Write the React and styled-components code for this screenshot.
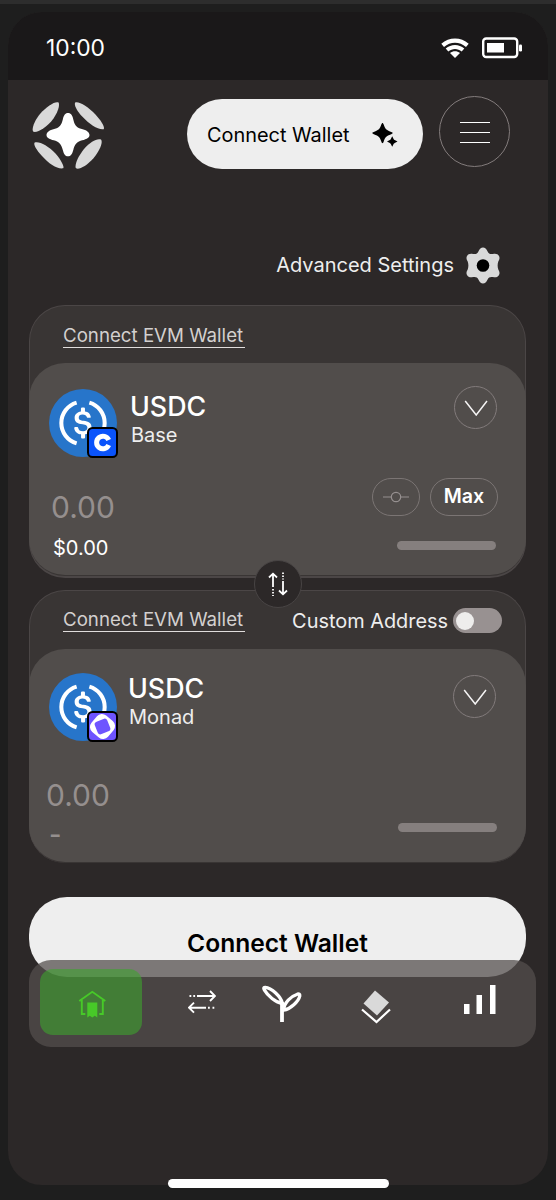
import styled, { createGlobalStyle } from "styled-components";

const GlobalStyle = createGlobalStyle`
  * {
    box-sizing: border-box;
  }

  body {
    margin: 0;
    background-color: #1e1e1e;
    font-family: Inter, "Liberation Sans", sans-serif;
  }

  button {
    font-family: inherit;
    padding: 0;
    border: none;
    background: none;
    cursor: pointer;
  }

  svg {
    display: block;
    flex: none;
  }
`;

const Page = styled.div`
  height: 1200px;
  padding: 8px 8px 0;
  border-top: 4px solid #2d2d2d;
  overflow: hidden;
`;

const Phone = styled.div`
  position: relative;
  width: 540px;
  height: 1173px;
  border-radius: 34px;
  background-color: #2c2828;
`;

const StatusBar = styled.div`
  display: flex;
  align-items: center;
  height: 68px;
  padding: 4px 26px 0 38px;
  border-radius: 34px 34px 0 0;
  background-color: #1a1819;
`;

const Clock = styled.span`
  flex: 1;
  color: white;
  font-size: 22.8px;
  line-height: 28px;
`;

const StatusIcons = styled.div`
  display: flex;
  align-items: center;
  gap: 13px;
  margin-top: -1px;
`;

const Header = styled.header`
  display: flex;
  align-items: center;
  height: 71px;
  margin-top: 16px;
  padding: 0 38px 0 24px;

  > svg {
    margin-top: 8px;
  }
`;

const WalletButton = styled.button`
  display: flex;
  align-items: center;
  justify-content: space-between;
  width: 236px;
  height: 70px;
  margin: 4px 16px 0 auto;
  padding: 2px 25px 0 20px;
  border-radius: 35px;
  background-color: #eeeeee;
  color: black;
  font-size: 19.9px;
`;

const MenuButton = styled.button`
  display: flex;
  flex-direction: column;
  align-items: center;
  justify-content: center;
  gap: 9px;
  width: 71px;
  height: 71px;
  padding-top: 1px;
  border: 1px solid #837c7c;
  border-radius: 50%;
`;

const MenuLine = styled.span`
  width: 30px;
  height: 1px;
  background-color: white;
`;

const Settings = styled.div`
  display: flex;
  align-items: center;
  justify-content: flex-end;
  gap: 12px;
  height: 38px;
  margin-top: 79px;
  padding-right: 48px;
  color: #eeeeee;
  font-size: 20px;
`;

const Swap = styled.main`
  position: relative;
  display: flex;
  flex-direction: column;
  gap: 12px;
  width: 497px;
  margin: 21px 0 0 21px;
`;

const Card = styled.section`
  height: 273px;
  border: 1px solid #4b4646;
  border-bottom-width: ${(props) => (props.$edge ? "2px" : "0")};
  border-radius: 36px;
  background-color: #393534;
`;

const CardTop = styled.div`
  display: flex;
  align-items: center;
  justify-content: space-between;
  height: ${(props) => props.$height}px;
  padding: ${(props) => props.$top}px 23px 0 34px;
`;

const EvmLink = styled.a`
  width: 182px;
  margin-left: -1px;
  border-bottom: 1px solid #e0dddc;
  color: #d3d0cf;
  font-size: 18.7px;
  line-height: 22px;
  white-space: nowrap;
`;

const Custom = styled.label`
  display: flex;
  align-items: center;
  gap: 5px;
  color: #eeeeee;
  font-size: 19.9px;
  white-space: nowrap;
`;

const Toggle = styled.span`
  display: flex;
  align-items: center;
  width: 49px;
  height: 25px;
  padding-left: 3px;
  border-radius: 13px;
  background-color: #989191;
`;

const Knob = styled.span`
  width: 18px;
  height: 18px;
  border-radius: 50%;
  background-color: #eeedec;
`;

const Panel = styled.div`
  display: flex;
  flex-direction: column;
  height: ${(props) => props.$height}px;
  margin: 0 -1px;
  padding: ${(props) => props.$top}px 29px 0 20px;
  border-radius: 36px;
  background-color: #514d4b;
`;

const TokenRow = styled.div`
  display: flex;
  align-items: flex-start;
`;

const TokenIcon = styled.div`
  position: relative;
  width: 68px;
  height: 68px;
  margin-top: ${(props) => props.$top}px;
`;

const ChainBadge = styled.div`
  position: absolute;
  right: -1px;
  bottom: -1px;
`;

const TokenText = styled.div`
  flex: 1;
  margin-top: ${(props) => props.$top}px;
  margin-left: ${(props) => props.$left}px;
`;

const Symbol = styled.div`
  color: white;
  font-size: 26.8px;
  font-weight: 500;
  line-height: 34px;
`;

const Chain = styled.div`
  padding-left: ${(props) => props.$indent}px;
  color: #eeeeee;
  font-size: 20px;
  line-height: 25px;
`;

const SelectButton = styled.button`
  display: flex;
  align-items: center;
  justify-content: center;
  width: 43px;
  height: 43px;
  margin-top: ${(props) => props.$top}px;
  margin-right: ${(props) => props.$right}px;
  border: 1px solid #827b7b;
  border-radius: 50%;
`;

const AmountRow = styled.div`
  display: flex;
  gap: 10px;
  height: 38px;
  margin-top: ${(props) => props.$top}px;
  margin-right: -1px;
`;

const Amount = styled.div`
  flex: 1;
  margin-top: ${(props) => props.$top}px;
  margin-left: ${(props) => props.$left}px;
  color: #958f8e;
  font-size: 30px;
  line-height: 38px;
`;

const Chip = styled.button`
  display: flex;
  align-items: center;
  justify-content: center;
  width: ${(props) => props.$width}px;
  height: 38px;
  border: 1px solid #7b7574;
  border-radius: 19px;
  color: white;
  font-size: 19.6px;
  font-weight: 600;
  line-height: 34px;
`;

const MaxLabel = styled.span`
  margin-bottom: 2px;
`;

const ValueRow = styled.div`
  display: flex;
  justify-content: space-between;
  margin-top: ${(props) => props.$top}px;
  padding-left: ${(props) => props.$left}px;
`;

const Value = styled.span`
  color: ${(props) => (props.$muted ? "#958f8e" : "white")};
  font-size: ${(props) => (props.$muted ? 27 : 20)}px;
  font-weight: ${(props) => (props.$muted ? 500 : 400)};
  line-height: 24px;
`;

const Balance = styled.span`
  width: 99px;
  height: 9px;
  margin: ${(props) => props.$offset};
  border-radius: 5px;
  background-color: #857f7e;
`;

const SwapButton = styled.button`
  position: absolute;
  top: 255px;
  left: 225px;
  display: flex;
  align-items: center;
  justify-content: center;
  width: 48px;
  height: 48px;
  border: 1px solid #484444;
  border-radius: 50%;
  background-color: #2c2828;
`;

const Connect = styled.button`
  display: block;
  width: 497px;
  height: 80px;
  margin: 34px 0 0 21px;
  padding-top: 12px;
  border-radius: 38px;
  background-color: #eeeeee;
  color: black;
  font-size: 24.6px;
  font-weight: 600;
`;

/* Floats above the page, overlapping the connect button. */
const Nav = styled.nav`
  position: absolute;
  top: 948px;
  left: 21px;
  display: grid;
  grid-template-columns: 102px 120px 40px 147px 62px;
  align-items: center;
  width: 507px;
  height: 87px;
  padding: 0 11px;
  border-radius: 22px;
  background-color: rgba(83, 78, 77, 0.74);
`;

const NavItem = styled.a`
  display: flex;
  align-items: center;
  justify-content: center;
  height: 66px;
  margin-top: -3px;
  border-radius: 13px;
  background-color: ${(props) =>
    props.$active ? "rgba(61, 163, 47, 0.6)" : "transparent"};

  svg {
    margin-top: ${(props) => props.$drop || 0}px;
    margin-left: ${(props) => (props.$active ? 2 : 0)}px;
  }
`;

const HomeIndicator = styled.div`
  position: absolute;
  bottom: -3px;
  left: 160px;
  width: 221px;
  height: 9px;
  border-radius: 5px;
  background-color: white;
`;

const Wifi = () => (
  <svg width="28" height="20" viewBox="0 0 28 20" fill="white">
    <path d="M0.3 5.8C8-1.4 20-1.4 27.7 5.8L25 9C18.8 3.3 9.2 3.3 3 9Z" />
    <path d="M4.7 10.5C10 5.7 18 5.7 23.3 10.5L20.7 13.5C16.8 10.1 11.2 10.1 7.3 13.5Z" />
    <path d="M9 15C12 12.5 16 12.5 19 15L14 20Z" />
  </svg>
);

const Battery = () => (
  <svg width="40" height="22" viewBox="0 0 40 22">
    <rect x="1.2" y="1.5" width="34" height="18.5" rx="3" fill="none" stroke="white" strokeWidth="2.4" />
    <rect x="5" y="6" width="17" height="9.5" fill="white" />
    <rect x="37" y="7.5" width="3" height="7" rx="1.3" fill="white" />
  </svg>
);

const Logo = () => (
  <svg width="72" height="68" viewBox="0 0 72 68">
    <g fill="#d9d9d9">
      <path d="M26.6 0.6C27.8 3 26.5 9 21.5 16.5C15 25.5 5.5 31 1.3 29.8C-0.8 27.5 2.5 18.5 8.2 11.8C15 4 23.5-1.2 26.6 0.6Z" />
      <path d="M43.2 0.5C47.5-0.7 56 4.8 63.7 12.7C70 19.5 73 25.5 71.7 27.2C66.5 28.2 57.5 22.5 50.5 14.8C44.5 8.3 41.8 2.7 43.2 0.5Z" />
      <path d="M2.7 40.4C7.5 39 16 43.5 23.5 51.5C29.5 58.5 32.7 65.3 31.2 66.3C26 67.5 17 62 10 54C4.5 48 1 42 2.7 40.4Z" />
      <path d="M69 37.5C71.3 40.5 67.5 48.5 61.5 56.2C54.5 64 46.5 68.2 43.8 66.1C42.5 62.7 46 54.5 52 47C58.5 39.5 65 36 69 37.5Z" />
    </g>
    <path
      fill="white"
      d="M36 11C39 11 40.5 13.5 41.3 17.5C42.5 22.5 44 25.5 49 26.7C53.5 27.8 57.5 29.7 57.5 33C57.5 36.5 53 37.6 48.5 38.8C44 40.3 42.5 43.5 41.3 48C40 52.5 38.7 54.3 36 54.3C33.3 54.3 32 52.5 30.8 48C29.5 43.5 28 40.3 23.5 38.8C19 37.6 14.5 36.5 14.5 33C14.5 29.7 18.5 27.8 23 26.7C28 25.5 29.5 22.5 30.8 17.5C31.7 13.5 33 11 36 11Z"
    />
  </svg>
);

const Sparkles = () => (
  <svg width="26" height="26" viewBox="0 0 26 26" fill="black">
    <path d="M10.5 1C11 1 11.3 1.5 11.7 2.6C13.2 7.2 14 8 19.2 9.9C21.3 10.7 21.3 11.5 19.2 12.3C14 14.2 13.2 15 11.7 19.6C11.1 21.8 9.9 21.8 9.3 19.6C7.8 15 7 14.2 1.8 12.3C-0.3 11.5-0.3 10.7 1.8 9.9C7 8 7.8 7.2 9.3 2.6C9.7 1.5 10 1 10.5 1Z" />
    <path d="M20.2 14.2L21.7 17.3Q22 17.8 22.7 18.1L25.5 19.5L22.7 20.9Q22 21.2 21.7 21.8L20.2 24.7L18.7 21.8Q18.4 21.2 17.8 20.9L15 19.5L17.8 18.1Q18.4 17.8 18.7 17.3Z" />
  </svg>
);

const Gear = () => (
  <svg width="34" height="37" viewBox="0 0 34 37">
    <path
      fill="#d9d9d9"
      d="M17 .5C19 .5 20.4 2 21.6 4.5C22.8 6.9 24.2 7.3 27 6.9C30 6.4 32 7 33 9C34 11 33.4 12.4 32.3 14.5C31.4 17 31.4 20 32.3 22.5C33.4 24.6 34 26 33 28C32 30 30 30.6 27 30.1C24.2 29.7 22.8 30.1 21.6 32.5C20.4 35 19 36.5 17 36.5C15 36.5 13.6 35 12.4 32.5C11.2 30.1 9.8 29.7 7 30.1C4 30.6 2 30 1 28C0 26 .6 24.6 1.7 22.5C2.6 20 2.6 17 1.7 14.5C.6 12.4 0 11 1 9C2 7 4 6.4 7 6.9C9.8 7.3 11.2 6.9 12.4 4.5C13.6 2 15 .5 17 .5Z"
    />
    <circle cx="17" cy="18.5" r="6.3" fill="black" />
  </svg>
);

const Usdc = () => (
  <svg width="68" height="68" viewBox="0 0 32 32">
    <circle cx="16" cy="16" r="16" fill="#2775ca" />
    <path
      fill="white"
      d="M20.02 18.12c0-2.12-1.28-2.85-3.83-3.15-1.82-.25-2.18-.73-2.18-1.58s.6-1.4 1.82-1.4c1.1 0 1.7.37 2 1.28.06.18.25.3.43.3h.97c.24 0 .42-.18.42-.42v-.06a3.04 3.04 0 0 0-2.73-2.49V9.15c0-.25-.18-.43-.49-.49h-.91c-.24 0-.43.18-.49.49v1.39c-1.82.25-2.97 1.46-2.97 2.97 0 2 1.21 2.79 3.76 3.1 1.7.3 2.25.66 2.25 1.63s-.85 1.64-2 1.64c-1.58 0-2.13-.67-2.31-1.58-.06-.24-.24-.36-.43-.36h-1.03c-.24 0-.42.18-.42.42v.06c.24 1.52 1.21 2.61 3.21 2.92v1.45c0 .25.19.43.49.49h.91c.24 0 .43-.18.49-.49v-1.45c1.82-.31 3.04-1.58 3.04-3.22z"
    />
    <g fill="none" stroke="white" strokeWidth="1.9">
      <path d="M13 6.4A10 10 0 0 0 13 25.6" />
      <path d="M19 6.4A10 10 0 0 1 19 25.6" />
    </g>
  </svg>
);

const BaseBadge = () => (
  <svg width="31" height="31" viewBox="0 0 31 31">
    <rect x="1" y="1" width="29" height="29" rx="4.5" fill="#0a53fb" stroke="black" strokeWidth="2" />
    <path d="M21.7 13A6.3 6.3 0 1 0 21.7 18" fill="none" stroke="white" strokeWidth="5" />
  </svg>
);

const MonadBadge = () => (
  <svg width="31" height="31" viewBox="0 0 31 31">
    <rect x="1" y="1" width="29" height="29" rx="4.5" fill="#6e54ff" stroke="black" strokeWidth="2" />
    <rect x="4.7" y="4.7" width="21.6" height="21.6" rx="6.5" fill="white" transform="rotate(40 15.5 15.5)" />
    <rect x="8.8" y="8.8" width="13.4" height="13.4" rx="3" fill="#6e54ff" transform="rotate(-22 15.5 15.5)" />
  </svg>
);

const Chevron = () => (
  <svg width="24" height="16" viewBox="0 0 24 16" fill="none" stroke="#f5f4f4" strokeWidth="1.5">
    <path d="M1.2 1L12.2 15L23 1" />
  </svg>
);

const Slider = () => (
  <svg width="26" height="12" viewBox="0 0 26 12" fill="none" stroke="#969090" strokeWidth="1.2">
    <path d="M0 6H8.3M17.7 6H26" />
    <circle cx="13" cy="6" r="4.7" />
  </svg>
);

const UpDown = () => (
  <svg width="20" height="24" viewBox="0 0 20 24" fill="none" stroke="white" strokeWidth="1.8">
    <path d="M5 15V2M1 5.5L5 1.7L9 5.5" />
    <path d="M15 9V22M11 18.5L15 22.3L19 18.5" />
    <path d="M5 17V24M15 0.5V7.5" strokeDasharray="1.5 1.5" />
  </svg>
);

const Home = () => (
  <svg width="28" height="28" viewBox="0 0 28 28" fill="none" stroke="#47c928" strokeWidth="1.9">
    <path d="M1.3 11L14.3 1.8L27.3 11M3.8 10V24H7.3M24.8 10V24H21.3" />
    <path d="M9.3 12.5H19.3V27.5L16.8 25.8L14.3 27.5L11.8 25.8L9.3 27.5Z" fill="#47c928" stroke="none" />
  </svg>
);

const Transfer = () => (
  <svg width="28" height="24" viewBox="0 0 28 24" fill="none" stroke="white" strokeWidth="1.9">
    <path d="M9 6H26M22 1L27 6L22 11" />
    <path d="M18 17.7H1.5M6 12.7L1 17.7L6 22.7" />
    <path d="M1.5 6H3.3M5.3 6H7.1M20 17.7H21.8M24.5 17.7H26.3" />
  </svg>
);

const Sprout = () => (
  <svg width="40" height="38" viewBox="0 0 40 38" fill="none" stroke="white" strokeWidth="3.3">
    <path d="M20 37V17" strokeWidth="3.8" />
    <path d="M20.5 18.5C19 11.5 9.5 2.8 3.2 2.3C1.4 2.2 1.5 3.5 2.5 5.2C5.5 10.5 13.5 17.5 20.5 18.5Z" />
    <path d="M21.6 25.2C28.5 24 36.5 16.5 37.8 10.8C38 9 37.2 8.7 35.3 9.2C29 11.2 22 17.5 21.6 25.2Z" />
  </svg>
);

const Layers = () => (
  <svg width="30" height="34" viewBox="0 0 30 34">
    <path d="M14 0.5L28 12.5L16 25.5L2.5 13.5Z" fill="#d9d9d9" />
    <path d="M1 19.5L15.5 32L29 19.5" fill="none" stroke="white" strokeWidth="2.2" />
  </svg>
);

const Bars = () => (
  <svg width="32" height="29" viewBox="0 0 32 29" fill="white">
    <rect x="0" y="19" width="5.5" height="10" />
    <rect x="12.5" y="10" width="5.5" height="19" />
    <rect x="26" y="0" width="5.5" height="29" />
  </svg>
);

const Token = ({ chain, badge, left, iconTop, textTop, selectTop, right }) => {
  return (
    <TokenRow>
      <TokenIcon $top={iconTop}>
        <Usdc />
        <ChainBadge>{badge}</ChainBadge>
      </TokenIcon>
      <TokenText $top={textTop} $left={left}>
        <Symbol>USDC</Symbol>
        <Chain $indent={1}>{chain}</Chain>
      </TokenText>
      <SelectButton $top={selectTop} $right={right}>
        <Chevron />
      </SelectButton>
    </TokenRow>
  );
};

const App = () => {
  return (
    <Page>
      <GlobalStyle />
      <Phone>
        <StatusBar>
          <Clock>10:00</Clock>
          <StatusIcons>
            <Wifi />
            <Battery />
          </StatusIcons>
        </StatusBar>
        <Header>
          <Logo />
          <WalletButton>
            Connect Wallet
            <Sparkles />
          </WalletButton>
          <MenuButton>
            <MenuLine />
            <MenuLine />
            <MenuLine />
          </MenuButton>
        </Header>
        <Settings>
          Advanced Settings
          <Gear />
        </Settings>
        <Swap>
          <Card $edge>
            <CardTop $height={57} $top={4}>
              <EvmLink>Connect EVM Wallet</EvmLink>
            </CardTop>
            <Panel $height={212} $top={23}>
              <Token
                chain="Base"
                badge={<BaseBadge />}
                left={13}
                iconTop={3}
                textTop={3}
                selectTop={0}
                right={0}
              />
              <AmountRow $top={21}>
                <Amount $top={10} $left={2}>0.00</Amount>
                <Chip $width={48}>
                  <Slider />
                </Chip>
                <Chip $width={68}>
                  <MaxLabel>Max</MaxLabel>
                </Chip>
              </AmountRow>
              <ValueRow $top={20} $left={4}>
                <Value>$0.00</Value>
                <Balance $offset="5px 1px 0 0" />
              </ValueRow>
            </Panel>
          </Card>
          <Card>
            <CardTop $height={58} $top={1}>
              <EvmLink>Connect EVM Wallet</EvmLink>
              <Custom>
                Custom Address
                <Toggle>
                  <Knob />
                </Toggle>
              </Custom>
            </CardTop>
            <Panel $height={213} $top={22}>
              <Token
                chain="Monad"
                badge={<MonadBadge />}
                left={11}
                iconTop={2}
                textTop={0}
                selectTop={4}
                right={1}
              />
              <AmountRow $top={35}>
                <Amount $top={0} $left={-3}>0.00</Amount>
              </AmountRow>
              <ValueRow $top={9} $left={0}>
                <Value $muted>-</Value>
                <Balance $offset="0" />
              </ValueRow>
            </Panel>
          </Card>
          <SwapButton>
            <UpDown />
          </SwapButton>
        </Swap>
        <Connect>Connect Wallet</Connect>
        <Nav>
          <NavItem $active $drop={3}>
            <Home />
          </NavItem>
          <NavItem>
            <Transfer />
          </NavItem>
          <NavItem $drop={4}>
            <Sprout />
          </NavItem>
          <NavItem $drop={10}>
            <Layers />
          </NavItem>
          <NavItem $drop={-5}>
            <Bars />
          </NavItem>
        </Nav>
        <HomeIndicator />
      </Phone>
    </Page>
  );
};

export default App;
